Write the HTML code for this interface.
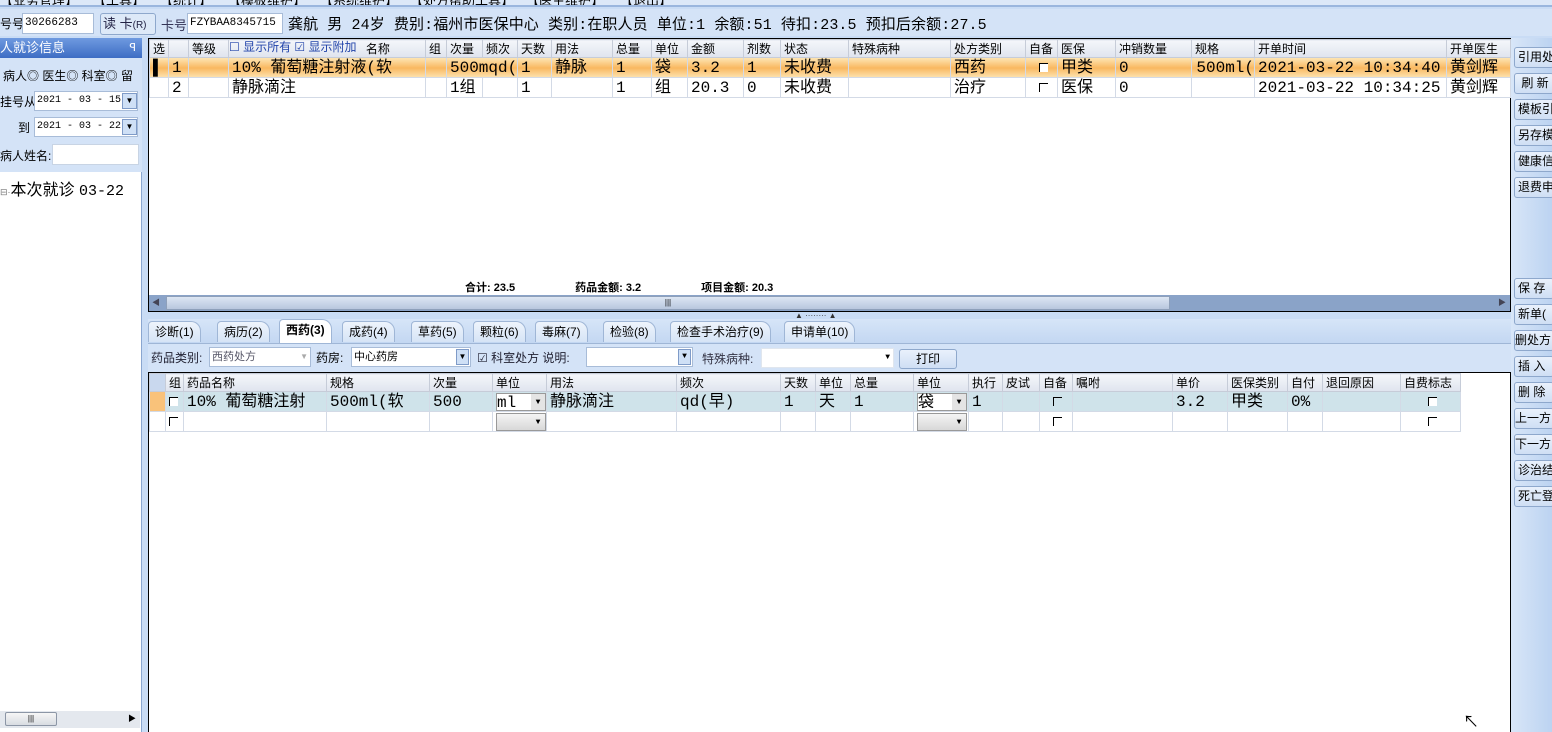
<!DOCTYPE html>
<html><head><meta charset="utf-8">
<style>
*{box-sizing:border-box;margin:0;padding:0}
body{width:1552px;height:732px;overflow:hidden;background:#c9dcf5;font-family:"Liberation Sans","Noto Sans CJK SC",sans-serif;font-size:12px;color:#000;position:relative}
.a{position:absolute}
.m{position:absolute;top:-10px;font-size:13px;white-space:nowrap}
.inp{position:absolute;background:#fff;border:1px solid #a8bcd8;font-family:"Liberation Mono","Noto Sans CJK SC",monospace;font-size:11px;line-height:18px;padding-left:2px;white-space:nowrap;overflow:hidden}
table{border-collapse:collapse;table-layout:fixed;position:absolute}
td{border:1px solid #d3dae6;white-space:nowrap;overflow:hidden;padding-left:3px}
tr.h td{background:linear-gradient(#f4f6fa,#dfe4ee);font-size:12px;height:18px;border-color:#c6ccd8}
tr.r td{font-family:"Liberation Mono","Noto Sans CJK SC",monospace;font-size:16px;height:20px;line-height:18px}
tr.sel td{background:linear-gradient(#fde3b0,#f9b860 50%,#fde3b0)}
tr.sel2 td{background:#cfe3ea}
.btn{position:absolute;left:1514px;width:40px;height:21px;border:1px solid #8ea8cc;border-radius:3px;background:linear-gradient(#e9f1fc,#cfdff4);font-size:12px;line-height:19px;padding-left:3px;white-space:nowrap;overflow:hidden}
.tab{position:absolute;top:321px;height:21px;font-size:12px;line-height:20px;padding:0 6px;border:1px solid #9fb6d6;border-bottom:none;border-radius:4px 10px 0 0;background:linear-gradient(#eef4fc,#d6e4f6)}
.cb{display:inline-block;width:9px;height:9px;border-left:1px solid #000;border-top:1px solid #000}
</style></head><body>
<!-- top menu -->
<div class="a" style="left:0;top:0;width:1552px;height:7px;background:#dce8f8;border-bottom:2px solid #9ab6de;overflow:hidden">
<span class="m" style="left:0">【业务管理】</span><span class="m" style="left:93px">【工具】</span><span class="m" style="left:160px">【统计】</span><span class="m" style="left:228px">【模板维护】</span><span class="m" style="left:320px">【系统维护】</span><span class="m" style="left:410px">【处方帮助工具】</span><span class="m" style="left:526px">【医生维护】</span><span class="m" style="left:620px">【退出】</span>
</div>
<div class="a" style="left:0;top:9px;width:1552px;height:27px;background:#d4e3f7"></div>
<div class="a" style="left:0;top:15px;font-size:12px">号号</div>
<div class="inp" style="left:22px;top:13px;width:72px;height:21px">30266283</div>
<div class="a" style="left:100px;top:13px;width:56px;height:22px;border:1px solid #8ea8cc;border-radius:3px;background:#dde9f8;font-size:13px;line-height:20px;padding-left:2px;color:#224">读 卡<span style="font-size:10px">(R)</span></div>
<div class="a" style="left:161px;top:15px;font-size:13px;color:#335">卡号</div>
<div class="inp" style="left:187px;top:13px;width:96px;height:21px">FZYBAA8345715</div>
<div class="a" style="left:288px;top:13px;font-size:15px;font-family:'Liberation Mono','Noto Sans CJK SC',monospace;white-space:nowrap;letter-spacing:0.1px">龚航 男 24岁 费别:福州市医保中心 类别:在职人员 单位:1 余额:51 待扣:23.5 预扣后余额:27.5</div>
<!-- left panel -->
<div class="a" style="left:0;top:38px;width:142px;height:20px;background:linear-gradient(#6f9ae0,#3d6dc4);color:#fff;font-size:13px;line-height:20px">人就诊信息<span style="position:absolute;right:6px;font-size:11px">ꟼ</span></div>
<div class="a" style="left:0;top:58px;width:142px;height:114px;background:#d4e3f7"></div>
<div class="a" style="left:3px;top:67px;font-size:12px;white-space:nowrap">病人◎ 医生◎ 科室◎ 留</div>
<div class="a" style="left:0;top:93px;font-size:12px">挂号从</div>
<div class="inp" style="left:34px;top:91px;width:104px;height:20px;font-size:10px">2021 - 03 - 15</div>
<div class="a" style="left:122px;top:93px;width:15px;height:16px;background:#cfe0f6;border:1px solid #7f9bc8;font-size:8px;text-align:center;line-height:14px">▼</div>
<div class="a" style="left:18px;top:119px;font-size:12px">到</div>
<div class="inp" style="left:34px;top:117px;width:104px;height:20px;font-size:10px">2021 - 03 - 22</div>
<div class="a" style="left:122px;top:119px;width:15px;height:16px;background:#cfe0f6;border:1px solid #7f9bc8;font-size:8px;text-align:center;line-height:14px">▼</div>
<div class="a" style="left:0;top:147px;font-size:12px">病人姓名:</div>
<div class="inp" style="left:52px;top:144px;width:87px;height:21px;border-color:#c8d4e4"></div>
<div class="a" style="left:0;top:172px;width:142px;height:560px;background:#fff;border-right:1px solid #8aa6d0"></div>
<div class="a" style="left:0;top:176px;font-size:16px;white-space:nowrap"><span style="font-size:9px;color:#777">⊟·</span>本次就诊 <span style="font-family:'Liberation Mono',monospace;font-size:15px">03-22</span></div>
<div class="a" style="left:0;top:711px;width:140px;height:17px;background:#e4e8ee"></div>
<div class="a" style="left:5px;top:712px;width:52px;height:14px;border:1px solid #8c96a6;border-radius:2px;background:linear-gradient(#f6f6f6,#d8dce2);font-size:8px;text-align:center;line-height:12px">|||</div>
<div class="a" style="left:128px;top:713px;font-size:8px">▶</div>
<div class="a" style="left:142px;top:38px;width:6px;height:694px;background:#c9dcf5"></div>
<!-- upper grid -->
<div class="a" style="left:148px;top:38px;width:1363px;height:274px;background:#fff;border:1px solid #000"></div>
<table style="left:149px;top:39px;width:1361px">
<colgroup><col style="width:19px"><col style="width:20px"><col style="width:40px"><col style="width:197px"><col style="width:21px"><col style="width:36px"><col style="width:35px"><col style="width:34px"><col style="width:61px"><col style="width:39px"><col style="width:36px"><col style="width:56px"><col style="width:37px"><col style="width:68px"><col style="width:102px"><col style="width:75px"><col style="width:32px"><col style="width:58px"><col style="width:76px"><col style="width:63px"><col style="width:192px"><col style="width:64px"></colgroup>
<tr class="h"><td>选</td><td></td><td>等级</td><td style="padding-left:0"><span style="color:#2244aa;position:relative;top:-2px">☐ 显示所有 ☑ 显示附加</span> <span style="margin-left:6px">名称</span></td><td>组</td><td>次量</td><td>频次</td><td>天数</td><td>用法</td><td>总量</td><td>单位</td><td>金额</td><td>剂数</td><td>状态</td><td>特殊病种</td><td>处方类别</td><td>自备</td><td>医保</td><td>冲销数量</td><td>规格</td><td>开单时间</td><td>开单医生</td></tr>
<tr class="r sel"><td>▌</td><td>1</td><td></td><td>10% 葡萄糖注射液(软</td><td></td><td colspan="2" style="overflow:visible">500mqd(</td><td>1</td><td>静脉</td><td>1</td><td>袋</td><td>3.2</td><td>1</td><td>未收费</td><td></td><td>西药</td><td style="text-align:center"><span class="cb" style="background:#fff"></span></td><td>甲类</td><td>0</td><td style="text-align:right">500ml(</td><td>2021-03-22 10:34:40</td><td>黄剑辉</td></tr>
<tr class="r"><td></td><td>2</td><td></td><td>静脉滴注</td><td></td><td>1组</td><td></td><td>1</td><td></td><td>1</td><td>组</td><td>20.3</td><td>0</td><td>未收费</td><td></td><td>治疗</td><td style="text-align:center"><span class="cb"></span></td><td>医保</td><td>0</td><td></td><td>2021-03-22 10:34:25</td><td>黄剑辉</td></tr>
</table>
<div class="a" style="left:465px;top:282px;font-size:11px;font-weight:bold;white-space:nowrap;line-height:12px">合计: 23.5<span style="margin-left:60px">药品金额: 3.2</span><span style="margin-left:60px">项目金额: 20.3</span></div>
<div class="a" style="left:149px;top:295px;width:1361px;height:16px;background:#8aa3c8"></div>
<div class="a" style="left:166px;top:296px;width:1004px;height:14px;background:linear-gradient(#dde6f3,#b8c7de);border:1px solid #8ea0ba;font-size:8px;text-align:center;line-height:12px">|||</div>
<div class="a" style="left:152px;top:297px;font-size:8px;color:#445">◀</div>
<div class="a" style="left:1498px;top:297px;font-size:8px;color:#445">▶</div>
<div class="a" style="left:795px;top:311px;font-size:8px;color:#333">▲ ········ ▲</div>
<!-- tabs -->
<div class="a" style="left:148px;top:319px;width:1363px;height:24px;background:linear-gradient(#d6e5f8,#c3d7f2)"></div>
<div class="tab" style="left:148px">诊断(1)</div>
<div class="tab" style="left:217px">病历(2)</div>
<div class="tab" style="left:279px;top:319px;height:25px;background:#fff;font-weight:bold">西药(3)</div>
<div class="tab" style="left:342px">成药(4)</div>
<div class="tab" style="left:411px">草药(5)</div>
<div class="tab" style="left:473px">颗粒(6)</div>
<div class="tab" style="left:535px">毒麻(7)</div>
<div class="tab" style="left:603px">检验(8)</div>
<div class="tab" style="left:670px">检查手术治疗(9)</div>
<div class="tab" style="left:784px">申请单(10)</div>
<div class="a" style="left:148px;top:343px;width:1363px;height:29px;background:#d4e3f7;border-top:1px solid #9fb6d6"></div>
<div class="a" style="left:151px;top:349px;font-size:12px;color:#223">药品类别:</div>
<div class="inp" style="left:209px;top:347px;width:102px;height:20px;color:#556;font-family:'Liberation Sans','Noto Sans CJK SC',sans-serif">西药处方<span style="position:absolute;right:2px;color:#aaa;font-size:8px">▼</span></div>
<div class="a" style="left:316px;top:349px">药房:</div>
<div class="inp" style="left:351px;top:347px;width:120px;height:20px;font-family:'Liberation Sans','Noto Sans CJK SC',sans-serif">中心药房<span style="position:absolute;right:1px;top:1px;width:13px;height:16px;background:#cfe0f6;border:1px solid #7f9bc8;font-size:8px;text-align:center;line-height:14px">▼</span></div>
<div class="a" style="left:477px;top:349px;color:#223">☑ 科室处方 说明:</div>
<div class="inp" style="left:586px;top:347px;width:107px;height:20px"><span style="position:absolute;right:1px;top:1px;width:13px;height:16px;background:#cfe0f6;border:1px solid #7f9bc8;font-size:8px;text-align:center;line-height:14px">▼</span></div>
<div class="a" style="left:702px;top:350px;color:#334">特殊病种:</div>
<div class="inp" style="left:761px;top:348px;width:133px;height:20px;border-color:#e0e6ee"><span style="position:absolute;right:3px;font-size:8px">▼</span></div>
<div class="a" style="left:899px;top:349px;width:58px;height:20px;border:1px solid #8ea8cc;border-radius:3px;background:linear-gradient(#e9f1fc,#cfdff4);text-align:center;line-height:18px">打印</div>
<!-- lower grid -->
<div class="a" style="left:148px;top:372px;width:1363px;height:360px;background:#fff;border:1px solid #000;border-bottom:none"></div>
<table style="left:149px;top:373px;width:1311px">
<colgroup><col style="width:16px"><col style="width:18px"><col style="width:143px"><col style="width:103px"><col style="width:63px"><col style="width:54px"><col style="width:130px"><col style="width:104px"><col style="width:35px"><col style="width:35px"><col style="width:63px"><col style="width:55px"><col style="width:34px"><col style="width:37px"><col style="width:33px"><col style="width:100px"><col style="width:55px"><col style="width:60px"><col style="width:35px"><col style="width:78px"><col style="width:60px"></colgroup>
<tr class="h"><td style="background:#c9d8ee"></td><td>组</td><td>药品名称</td><td>规格</td><td>次量</td><td>单位</td><td>用法</td><td>频次</td><td>天数</td><td>单位</td><td>总量</td><td>单位</td><td>执行</td><td>皮试</td><td>自备</td><td>嘱咐</td><td>单价</td><td>医保类别</td><td>自付</td><td>退回原因</td><td>自费标志</td></tr>
<tr class="r sel2"><td style="background:#f9c27a"></td><td><span class="cb" style="background:#fff"></span></td><td>10% 葡萄糖注射</td><td>500ml(软</td><td>500</td><td><div style="width:50px;height:18px;border:1px solid #999;background:#fff;position:relative">ml<span style="position:absolute;right:0;top:0;width:14px;height:16px;background:#e4e4e4;font-size:8px;text-align:center">▼</span></div></td><td>静脉滴注</td><td>qd(早)</td><td>1</td><td>天</td><td>1</td><td><div style="width:50px;height:18px;border:1px solid #999;background:#fff;position:relative">袋<span style="position:absolute;right:0;top:0;width:14px;height:16px;background:#e4e4e4;font-size:8px;text-align:center">▼</span></div></td><td>1</td><td></td><td style="text-align:center"><span class="cb"></span></td><td></td><td>3.2</td><td>甲类</td><td>0%</td><td></td><td style="text-align:center"><span class="cb" style="background:#fff"></span></td></tr>
<tr class="r"><td></td><td><span class="cb"></span></td><td></td><td></td><td></td><td><div style="width:50px;height:18px;border:1px solid #999;background:linear-gradient(#f4f4f4,#d8d8d8);position:relative"><span style="position:absolute;right:0;top:0;width:14px;height:16px;font-size:8px;text-align:center">▼</span></div></td><td></td><td></td><td></td><td></td><td></td><td><div style="width:50px;height:18px;border:1px solid #999;background:linear-gradient(#f4f4f4,#d8d8d8);position:relative"><span style="position:absolute;right:0;top:0;width:14px;height:16px;font-size:8px;text-align:center">▼</span></div></td><td></td><td></td><td style="text-align:center"><span class="cb"></span></td><td></td><td></td><td></td><td></td><td></td><td style="text-align:center"><span class="cb"></span></td></tr>
</table>
<div class="a" style="left:1463px;top:708px;font-size:16px">↖</div>
<!-- right buttons -->
<div class="a" style="left:1511px;top:38px;width:41px;height:694px;background:linear-gradient(90deg,#d8e6f8,#bcd3f1)"></div>
<div class="btn" style="top:47px">引用处</div>
<div class="btn" style="top:73px">&nbsp;刷 新</div>
<div class="btn" style="top:99px">模板引</div>
<div class="btn" style="top:125px">另存模</div>
<div class="btn" style="top:151px">健康信</div>
<div class="btn" style="top:177px">退费申</div>
<div class="btn" style="top:278px">保 存</div>
<div class="btn" style="top:304px">新单(</div>
<div class="btn" style="top:330px;padding-left:0">删处方</div>
<div class="btn" style="top:356px">插 入</div>
<div class="btn" style="top:382px">删 除</div>
<div class="btn" style="top:408px;padding-left:0">上一方</div>
<div class="btn" style="top:434px;padding-left:0">下一方</div>
<div class="btn" style="top:460px">诊治结</div>
<div class="btn" style="top:486px">死亡登</div>
</body></html>
